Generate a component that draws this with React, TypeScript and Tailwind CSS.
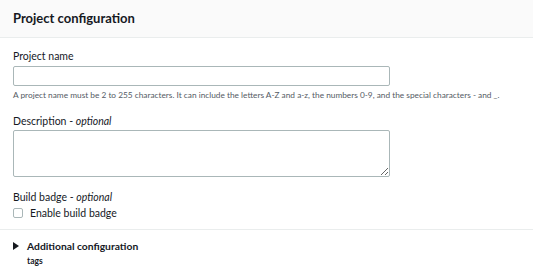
export default function App() {
  return (
    <div className="w-[533px] h-[275px] bg-white overflow-hidden text-[#16191f]" style={{ fontFamily: 'Lato, "Noto Sans", sans-serif' }}>
      <div className="h-[38px] bg-[#fafafa] border-b border-[#eaeded] px-[13px] flex items-center">
        <h2 className="text-[13px] font-bold leading-none">Project configuration</h2>
      </div>
      <div className="px-[13px] pt-[11px]">
        <label className="block text-[10.5px] leading-[14px]">Project name</label>
        <input className="mt-[3px] block w-[377px] h-[20px] border border-[#aab7b8] rounded-[2px] outline-none" />
        <p className="mt-[4px] text-[8.3px] leading-[11px] text-[#545b64] whitespace-nowrap">
          A project name must be 2 to 255 characters. It can include the letters A-Z and a-z, the numbers 0-9, and the special characters - and _.
        </p>
        <label className="mt-[13px] block text-[10.5px] leading-[14px]">
          Description - <span className="italic">optional</span>
        </label>
        <textarea className="mt-[2px] block w-[377px] h-[47px] border border-[#aab7b8] rounded-[2px] outline-none resize-y" />
        <label className="mt-[13px] block text-[10.5px] leading-[14px]">
          Build badge - <span className="italic">optional</span>
        </label>
        <div className="mt-[2px] flex items-center gap-[7px]">
          <span className="w-[10px] h-[10px] border border-[#aab7b8] rounded-[2px]" />
          <span className="text-[10.5px] leading-[14px]">Enable build badge</span>
        </div>
      </div>
      <div className="mt-[9px] border-t border-[#eaeded]" />
      <div className="px-[13px] pt-[9px]">
        <div className="flex items-center gap-[8px]">
          <svg width="6" height="8" viewBox="0 0 6 8"><path d="M0 0 L6 4 L0 8 Z" fill="#16191f" /></svg>
          <span className="text-[10.3px] font-bold leading-[14px]">Additional configuration</span>
        </div>
        <div className="ml-[14px] mt-[2px] text-[8.5px] font-bold leading-[12px] text-[#16191f]">tags</div>
      </div>
    </div>
  );
}
